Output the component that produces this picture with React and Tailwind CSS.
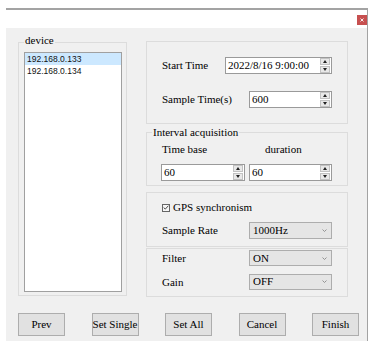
import React from 'react'

const serif = "font-['Liberation_Serif','Times_New_Roman',serif]"

function Arrow({ up }) {
  return (
    <div className="w-[10px] h-[7px] bg-[#e8e8e8] border border-[#c2c2c2] flex items-center justify-center">
      <svg width="4" height="3" viewBox="0 0 4 3">
        {up ? <polygon points="2,0 4,3 0,3" fill="#222" /> : <polygon points="0,0 4,0 2,3" fill="#222" />}
      </svg>
    </div>
  )
}

function SpinBox({ value, width }) {
  return (
    <div className={`flex items-center h-[17px] bg-white border border-[#9a9a9a] ${width}`}>
      <span className="flex-1 pl-[2px] text-[11px] leading-[15px] text-black">{value}</span>
      <div className="flex flex-col gap-[1px] mr-[1px]">
        <Arrow up />
        <Arrow />
      </div>
    </div>
  )
}

function Combo({ value, height }) {
  return (
    <div className={`flex items-center justify-between w-[83px] ${height} bg-[#e5e5e5] border border-[#adadad] pl-[3px] pr-[4px]`}>
      <span className="text-[11px] leading-[13px] text-black">{value}</span>
      <svg width="5" height="3" viewBox="0 0 5 3">
        <polyline points="0.5,0.5 2.5,2.5 4.5,0.5" fill="none" stroke="#8a8a8a" strokeWidth="0.9" />
      </svg>
    </div>
  )
}

function Btn({ children }) {
  return (
    <button className="w-[47px] h-[23px] bg-[#e1e1e1] border border-[#adadad] text-[11px] text-black flex items-center justify-center whitespace-nowrap">
      {children}
    </button>
  )
}

export default function App() {
  return (
    <div className={`min-h-[350px] bg-white pl-[6px] pt-[8px] ${serif} text-black`}>
      <div className="w-[362px] border-t-2 border-r border-[#a3a3a3]">
        {/* Title bar */}
        <div className="h-[18px] bg-white flex justify-end items-start pt-[5px]">
          <div className="w-[10px] h-[10px] bg-[#c75050] flex items-center justify-center">
            <svg width="4" height="4" viewBox="0 0 4 4">
              <path d="M0.5 0.5 L3.5 3.5 M3.5 0.5 L0.5 3.5" stroke="#fff" strokeWidth="0.9" />
            </svg>
          </div>
        </div>

        {/* Body */}
        <div className="h-[313px] bg-[#f0f0f0] pt-[13px] pl-[12px]">
          <div className="flex items-start">
            {/* Device group */}
            <div className="relative mt-[1px] w-[109px] h-[254px] border border-[#dcdcdc] pt-[9px] pl-[5px]">
              <span className="absolute left-[5px] -top-[9px] px-[1px] bg-[#f0f0f0] text-[11px] leading-[13px]">device</span>
              <div className="w-[98px] h-[240px] bg-white border border-[#a0a0a0] font-['Liberation_Sans',Arial,sans-serif] text-[8.5px] text-[#111]">
                <div className="h-[12px] bg-[#cce8ff] pl-[2px] flex items-center">192.168.0.133</div>
                <div className="h-[12px] pl-[2px] flex items-center">192.168.0.134</div>
              </div>
            </div>

            {/* Right column */}
            <div className="ml-[19px] w-[202px] flex flex-col">
              <div className="border border-[#dcdcdc] pt-[15px] pb-[15px] pl-[15px] pr-[15px] flex flex-col gap-[17px]">
                <div className="flex items-center justify-between text-[11px]">
                  <span>Start Time</span>
                  <SpinBox value="2022/8/16 9:00:00" width="w-[107px]" />
                </div>
                <div className="flex items-center justify-between text-[11px]">
                  <span>Sample Time(s)</span>
                  <SpinBox value="600" width="w-[83px]" />
                </div>
              </div>

              <div className="relative mt-[8px] border border-[#dcdcdc] pt-[10px] pb-[4px] pl-[14px] pr-[15px]">
                <span className="absolute left-[5px] -top-[7px] px-[1px] bg-[#f0f0f0] text-[11px] leading-[13px]">Interval acquisition</span>
                <div className="flex text-[11px] leading-[13px]">
                  <span className="w-[88px] pl-[1px]">Time base</span>
                  <span className="pl-[16px]">duration</span>
                </div>
                <div className="flex gap-[4px] mt-[8px]">
                  <SpinBox value="60" width="w-[84px]" />
                  <SpinBox value="60" width="w-[83px]" />
                </div>
              </div>

              <div className="mt-[6px] border border-[#dcdcdc] pt-[8px] pb-[7px] pl-[15px] pr-[15px]">
                <div className="flex items-center h-[13px] text-[11px]">
                  <span className="w-[8px] h-[8px] border border-[#666] bg-[#f6f6f6] flex items-center justify-center mr-[3px]">
                    <svg width="6" height="5" viewBox="0 0 6 5">
                      <polyline points="0.6,2.5 2.3,4.1 5.4,0.7" fill="none" stroke="#333" strokeWidth="0.9" />
                    </svg>
                  </span>
                  <span>GPS synchronism</span>
                </div>
                <div className="flex items-center justify-between mt-[8px] text-[11px]">
                  <span>Sample Rate</span>
                  <Combo value="1000Hz" height="h-[17px]" />
                </div>
              </div>

              <div className="mt-[1px] border border-[#dcdcdc] pt-[1px] pb-[6px] pl-[15px] pr-[15px] flex flex-col gap-[7px]">
                <div className="flex items-center justify-between text-[11px]">
                  <span>Filter</span>
                  <Combo value="ON" height="h-[16px]" />
                </div>
                <div className="flex items-center justify-between text-[11px]">
                  <span>Gain</span>
                  <Combo value="OFF" height="h-[16px]" />
                </div>
              </div>
            </div>
          </div>

          {/* Buttons */}
          <div className="mt-[16px] pr-[8px] flex justify-between">
            <Btn>Prev</Btn>
            <Btn>Set Single</Btn>
            <Btn>Set All</Btn>
            <Btn>Cancel</Btn>
            <Btn>Finish</Btn>
          </div>
        </div>
      </div>
    </div>
  )
}
